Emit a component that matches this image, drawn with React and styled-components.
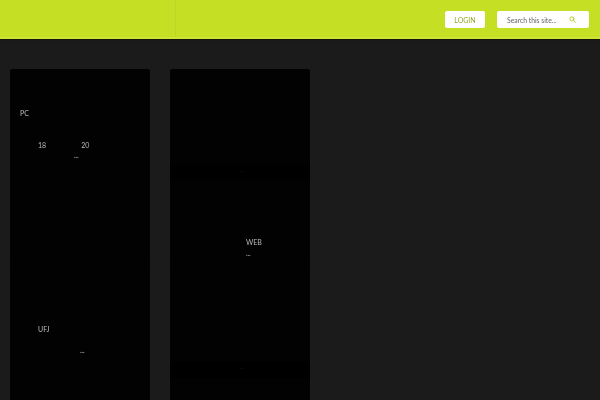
import React from "react";
import styled, { createGlobalStyle } from "styled-components";

const Global = createGlobalStyle`
  html, body { margin: 0; padding: 0; height: 100%; background: #1b1b1b; overflow: hidden; }
  body { font-family: Lato, "Liberation Sans", sans-serif; }
`;

const Page = styled.div`
  width: 600px;
  height: 400px;
  overflow: hidden;
  background: #1b1b1b;
`;

const Header = styled.header`
  box-sizing: border-box;
  height: 39px;
  background: #c5e024;
  border-bottom: 2px solid #cbe436;
  box-shadow: 0 1px 1px #14160a;
  display: flex;
  align-items: center;
  justify-content: flex-end;
  gap: 12px;
  padding: 2px 11px 0 0;
  position: relative;
`;

const Divider = styled.span`
  position: absolute;
  left: 175px;
  top: 0;
  bottom: 0;
  width: 1px;
  background: #bcd628;
`;

const LoginButton = styled.button`
  box-sizing: border-box;
  width: 40px;
  height: 17px;
  margin: 0;
  padding: 0;
  border: 0;
  border-radius: 2px;
  background: #fff;
  color: #95a927;
  font: 400 7px Lato, sans-serif;
  text-align: center;
  filter: blur(0.25px);
`;

const Search = styled.div`
  box-sizing: border-box;
  width: 92px;
  height: 17px;
  border-radius: 2px;
  background: #fff;
  display: flex;
  align-items: center;
  justify-content: space-between;
  padding: 0 13px 0 10px;
  color: #666;
  font-size: 6.8px;
  filter: blur(0.25px);
`;

const Columns = styled.main`
  display: flex;
  gap: 20px;
  padding: 30px 0 0 10px;
`;

const Column = styled.section`
  width: 140px;
  display: flex;
  flex-direction: column;
`;

const Card = styled.article`
  box-sizing: border-box;
  height: 195px;
  flex: none;
  background: #020202;
  border-radius: 1px;
  overflow: hidden;
  padding-top: ${(p) => p.$pad || 0}px;
  &:first-child {
    border-radius: 3px 3px 1px 1px;
  }
`;

const Line = styled.div`
  display: flex;
  height: 10px;
  line-height: 10px;
  margin-top: ${(p) => p.$top || 0}px;
  padding-left: ${(p) => p.$left || 0}px;
  gap: ${(p) => p.$gap || 0}px;
  color: #bdbdbd;
  font-size: 7px;
  filter: blur(0.2px);
`;

const Ellipsis = styled(Line)`
  color: #999;
  font-size: 7px;
  font-weight: 700;
  letter-spacing: -0.2px;
`;

const Band = styled.div`
  height: 16px;
  margin-top: ${(p) => p.$top || 0}px;
  background: #000;
  color: #1c1c1c;
  font-size: 6px;
  line-height: 9px;
  padding-left: 70px;
`;

export default function App() {
  return (
    <Page>
      <Global />
      <Header>
        <Divider />
        <LoginButton>LOGIN</LoginButton>
        <Search>
          <span>Search this site...</span>
          <svg width="7" height="7" viewBox="0 0 24 24" fill="none" stroke="#b5cf3a" strokeWidth="3.4" strokeLinecap="round">
            <circle cx="10" cy="10" r="7" />
            <path d="M15.5 15.5 22 22" />
          </svg>
        </Search>
      </Header>
      <Columns>
        <Column>
          <Card $pad={39}>
            <Line $left={10}>PC</Line>
            <Line $left={28} $top={22} $gap={35}>
              <span>18</span>
              <span>20</span>
            </Line>
            <Ellipsis $left={64} $top={0}>...</Ellipsis>
          </Card>
          <Card $pad={60}>
            <Line $left={28}>UFJ</Line>
            <Ellipsis $left={70} $top={11}>...</Ellipsis>
          </Card>
        </Column>
        <Column>
          <Card $pad={96}>
            <Band>...</Band>
            <Line $left={76} $top={56}>WEB</Line>
            <Ellipsis $left={76} $top={1}>...</Ellipsis>
          </Card>
          <Card>
            <Band $top={98}>...</Band>
          </Card>
        </Column>
      </Columns>
    </Page>
  );
}
